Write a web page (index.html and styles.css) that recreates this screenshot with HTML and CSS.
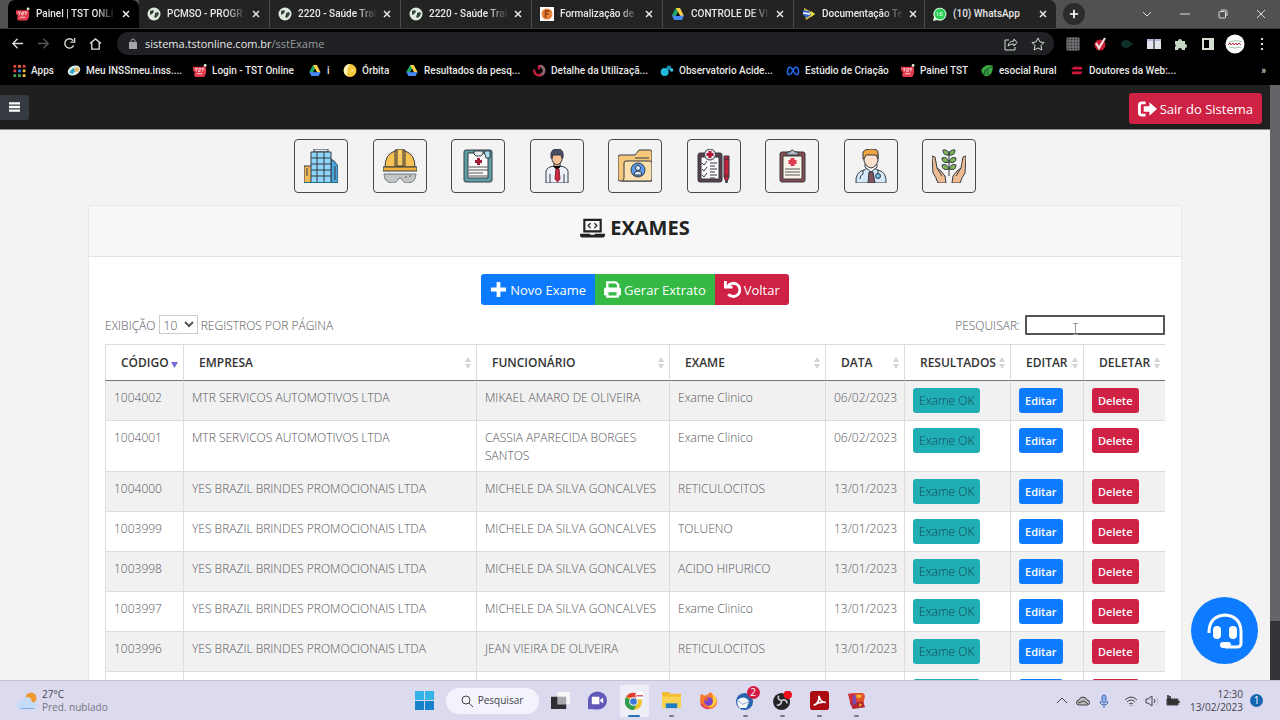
FILE: index.html
```html
<!DOCTYPE html>
<html lang="pt-BR">
<head>
    <meta charset="UTF-8">
    <meta name="viewport" content="width=device-width, initial-scale=1.0">
    <title>Painel | TST ONLINE</title>
    <link rel="stylesheet" href="styles.css">
</head>
<body>
    <!-- Shared icons -->
    <svg class="sprite" aria-hidden="true">
        <symbol id="tst" viewBox="0 0 15 14">
            <path d="M0 3h11l1-1 2 2v6l-1 2-1 2H2l-1-3 1-2-2-2z" fill="#e03a4c"/>
            <path d="M2 5h3M3.500 5v3M6 5h2v1.500h-2V8h2M9 5h3M10.500 5v3M4 10.500h6" stroke="#ffd9dc" fill="none"/>
            <circle cx="13" cy="1.500" r="1.500" fill="#dff3df"/>
        </symbol>
        <symbol id="globe" viewBox="0 0 14 14">
            <circle cx="7" cy="7" r="6.500" fill="#dfe8dc"/>
            <path d="M3 4l3-1 1 2-2 2-2 1zM8 6l3-1 1 2-2 3-2 1-1-2 1-1z" fill="#33443a"/>
        </symbol>
        <symbol id="drive" viewBox="0 0 14 14">
            <path d="M5 1h4l-5 12-3-5z" fill="#1fa463"/>
            <path d="M5 1h4l4 8H9z" fill="#ffcf48"/>
            <path d="M1 8.500h12L11 13H3z" fill="#4688f4"/>
            <path d="M7 5l2 4H5z" fill="#0b0b0b"/>
        </symbol>
        <symbol id="close" viewBox="0 0 8 8"><path d="M1 1l6 6M7 1L1 7" stroke="currentColor" stroke-width="1.500"/></symbol>
        <symbol id="sort" viewBox="0 0 6 12"><path d="M3 0l3 5H0zM3 12l3-5H0z" fill="#d3d3d8"/></symbol>
    </svg>

    <header class="browser">
        <div class="tab-strip">
            <div class="tab active"><svg><use href="#tst"/></svg><span>Painel | TST ONLI</span><button aria-label="Fechar"><svg><use href="#close"/></svg></button></div>
            <div class="tab"><svg><use href="#globe"/></svg><span>PCMSO - PROGR</span><button aria-label="Fechar"><svg><use href="#close"/></svg></button></div>
            <div class="tab"><svg><use href="#globe"/></svg><span>2220 - Saúde Tral</span><button aria-label="Fechar"><svg><use href="#close"/></svg></button></div>
            <div class="tab"><svg><use href="#globe"/></svg><span>2220 - Saúde Tral</span><button aria-label="Fechar"><svg><use href="#close"/></svg></button></div>
            <div class="tab"><svg viewBox="0 0 14 14"><path d="M0 0h14v14H0z" fill="#fff"/><circle cx="7" cy="7" r="5.500" fill="#e8833a"/><path d="M5.500 11V4h4M5.500 7h3" stroke="#8c3d12" stroke-width="1.500" fill="none"/></svg><span>Formalização de</span><button aria-label="Fechar"><svg><use href="#close"/></svg></button></div>
            <div class="tab"><svg><use href="#drive"/></svg><span>CONTROLE DE VI</span><button aria-label="Fechar"><svg><use href="#close"/></svg></button></div>
            <div class="tab"><svg viewBox="0 0 14 14"><path d="M2 1l11 6-9 6z" fill="#f5d13b"/><path d="M1 3l6 1 2 4-4 3-4-3z" fill="#3568c9"/><path d="M1 6l7 1" stroke="#fff" stroke-width="1.500"/><path d="M9 4l4 3-4 3z" fill="#e9e03a"/></svg><span>Documentação Te</span><button aria-label="Fechar"><svg><use href="#close"/></svg></button></div>
            <div class="tab last"><svg viewBox="0 0 14 14"><path d="M0 14l1-4a6.500 6.500 0 1 1 3 3z" fill="#e9fbe9"/><circle cx="7" cy="7" r="5.500" fill="#2bce55"/><path d="M4 5l1 4M7 5.500h2v3H7z" stroke="#b8f5c6" fill="none"/></svg><span>(10) WhatsApp</span><button aria-label="Fechar"><svg><use href="#close"/></svg></button></div>
            <button class="new-tab" aria-label="Nova guia"><svg viewBox="0 0 12 12"><path d="M6 1v10M1 6h10" stroke="#fff" stroke-width="2"/></svg></button>
            <div class="window-buttons">
                <button aria-label="Pesquisar guias"><svg viewBox="0 0 10 10"><path d="M1 3l4 4 4-4" /></svg></button>
                <button aria-label="Minimizar"><svg viewBox="0 0 10 10"><path d="M0 5h10"/></svg></button>
                <button aria-label="Restaurar"><svg viewBox="0 0 10 10"><rect x="1" y="2.500" width="6.500" height="6.500" rx="1"/><path d="M3 1h4.500q1.500 0 1.500 1.500V7"/></svg></button>
                <button aria-label="Fechar janela"><svg viewBox="0 0 10 10"><path d="M1 1l8 8M9 1L1 9"/></svg></button>
            </div>
        </div>

        <div class="toolbar">
            <div class="nav-buttons">
                <button aria-label="Voltar"><svg viewBox="0 0 14 14"><path d="M13 7H2M7 2L2 7l5 5"/></svg></button>
                <button aria-label="Avançar" disabled><svg viewBox="0 0 14 14"><path d="M1 7h11M7 2l5 5-5 5"/></svg></button>
                <button aria-label="Recarregar"><svg viewBox="0 0 14 14"><path d="M11.500 9A5 5 0 1 1 11 4M12.500 1v4.500H8"/></svg></button>
                <button aria-label="Início"><svg viewBox="0 0 14 14"><path d="M1 7l6-5 6 5M3 6v7h8V6"/></svg></button>
            </div>
            <div class="address">
                <svg class="lock" viewBox="0 0 8 11"><path d="M0 4h8v7H0z" fill="#a5a5a8"/><path d="M2 5V3a2 2 0 0 1 4 0v2" stroke="#a5a5a8" fill="none"/></svg>
                <a href="#">sistema.tstonline.com.br<span>/sstExame</span></a>
                <button aria-label="Compartilhar"><svg viewBox="0 0 14 14"><path d="M5 3H1v10h10v-3M4 9q1-5 6-5V2l3 3.500L10 9V7Q6 7 4 9z"/></svg></button>
                <button aria-label="Favoritar"><svg viewBox="0 0 14 14"><path d="M7 1l2 4 4 .5-3 3 .8 4.500L7 11l-3.800 2 .8-4.500-3-3L5 5z"/></svg></button>
            </div>
            <div class="extensions">
                <svg viewBox="0 0 14 14"><path d="M1 1h12v12H1zM1 4h12M1 7h12M1 10h12M4 1v12M7 1v12M10 1v12" stroke="#85858a" fill="#333"/></svg>
                <svg viewBox="0 0 14 14"><circle cx="7" cy="8" r="5.500" fill="#c71c2f"/><path d="M3 6l3 5 6-10" stroke="#f4dede" stroke-width="2.200" fill="none"/></svg>
                <svg viewBox="0 0 14 14"><ellipse cx="6" cy="7" rx="5" ry="4" fill="#0d3029"/><path d="M9 7h4" stroke="#0d3029" stroke-width="2"/></svg>
                <svg viewBox="0 0 14 14"><path d="M0 2h6.500v10H0zM7.500 2H14v10H7.500z" fill="#e3e3ec"/><path d="M0 3h6.500M7.500 3H14" stroke="#7f8fc0"/></svg>
                <svg viewBox="0 0 14 14"><path d="M1 4h3a2 2 0 1 1 4 0h3v3a2 2 0 1 1 0 4v2H8a2 2 0 0 0-4 0H1v-3a2 2 0 0 0 0-3z" fill="#c5d6c2"/></svg>
                <svg viewBox="0 0 14 14"><path d="M2 2h10v10H2z" fill="none" stroke="#d3ded0" stroke-width="2"/><path d="M8 2h4v10H8z" fill="#d3ded0"/></svg>
                <svg class="avatar" viewBox="0 0 20 20"><circle cx="10" cy="10" r="9.500" fill="#fff"/><path d="M3 9q7-4 14-1M4 13q6 2 12 0" stroke="#96c7a4" fill="none"/><path d="M3 11l2-2 1 2 2-2 1 2 2-2 1 2 2-2 2 2" stroke="#c72b41" fill="none"/></svg>
                <svg viewBox="0 0 14 14"><path d="M6 1h2v2H6zM6 6h2v2H6zM6 11h2v2H6z" fill="#ddd"/></svg>
            </div>
        </div>

        <nav class="bookmarks">
            <a href="#"><svg viewBox="0 0 14 14"><path d="M1 1h3v3H1zM1 6h3v3H1z" fill="#e5453c"/><path d="M6 1h3v3H6z" fill="#eb6b42"/><path d="M6 6h3v3H6z" fill="#3f83e8"/><path d="M11 1h3v3h-3z" fill="#e5453c"/><path d="M11 6h3v3h-3zM11 11h3v3h-3z" fill="#f0bf35"/><path d="M1 11h3v3H1zM6 11h3v3H6z" fill="#3faa59"/></svg>Apps</a>
            <a href="#"><svg viewBox="0 0 14 14"><ellipse cx="7" cy="7" rx="7" ry="5" fill="#dff0ea" transform="rotate(-25 7 7)"/><path d="M2 9l4-5 3 3-4 4z" fill="#34a7c7"/><circle cx="10" cy="6" r="2.500" fill="#e8b765"/></svg>Meu INSSmeu.inss....</a>
            <a href="#"><svg><use href="#tst"/></svg>Login - TST Online</a>
            <a href="#"><svg><use href="#drive"/></svg>i</a>
            <a href="#"><svg viewBox="0 0 14 14"><circle cx="7" cy="7" r="7" fill="#f5c93a"/><path d="M7 0A7 7 0 0 0 5 13.500Q2 8 7 0z" fill="#fff3c4"/><path d="M9 5l3 2-4 2z" fill="#fbe690"/></svg>Órbita</a>
            <a href="#"><svg><use href="#drive"/></svg>Resultados da pesq...</a>
            <a href="#"><svg viewBox="0 0 14 14"><path d="M8 2a5 5 0 0 1-1 10" stroke="#8b6e76" stroke-width="3" fill="none"/><path d="M2 6a5 5 0 0 0 8 5M7 1v5" stroke="#c51e3f" stroke-width="2.500" fill="none"/></svg>Detalhe da Utilizaçã...</a>
            <a href="#"><svg viewBox="0 0 14 14"><circle cx="4.500" cy="8.500" r="4.300" fill="#21b8dc"/><circle cx="9" cy="4" r="2.500" fill="#1d8fb6"/><circle cx="12" cy="6.500" r="1.800" fill="#37cfe8"/></svg>Observatorio Acide...</a>
            <a href="#"><svg viewBox="0 0 14 14"><path d="M1 9c0-7 4-7 6-2s6 6 6 2c0-7-4-7-6-2s-6 6-6 2z" stroke="#1e6df0" stroke-width="1.600" fill="none"/></svg>Estúdio de Criação</a>
            <a href="#"><svg><use href="#tst"/></svg>Painel TST</a>
            <a href="#"><svg viewBox="0 0 14 14"><path d="M1 6q5-7 12-4 1 8-5 11-7 1-7-7z" fill="#3fa646"/><path d="M3 12q1-6 9-9M5 6v6M8 5v7" stroke="#12501c" fill="none"/></svg>esocial Rural</a>
            <a href="#"><svg viewBox="0 0 14 14"><path d="M3 3h9l1 3H1zM1 8h12l-2 3H2z" fill="#d3163c"/></svg>Doutores da Web:...</a>
            <a href="#" class="more">»</a>
        </nav>
    </header>

    <div class="viewport">
        <main class="page">
            <div class="topbar">
                <button class="menu-toggle" aria-label="Menu"><svg viewBox="0 0 12 12"><path d="M0 2h12M0 6h12M0 10h12" stroke="#fff" stroke-width="2.500"/></svg></button>
                <button class="btn btn-danger logout"><svg viewBox="0 0 20 16"><path d="M8 1.500H4Q1.500 1.500 1.500 4v8q0 2.500 2.500 2.500h4" stroke="#fff" stroke-width="3" fill="none"/><path d="M6 5h6V1l8 7-8 7v-4H6z" fill="#fff"/></svg>Sair do Sistema</button>
            </div>

            <nav class="modules">
                <a href="#" aria-label="Empresas"><svg viewBox="0 0 34 34"><path d="M0 17h8v17H0z" fill="#f0b95b"/><path d="M3 19v8" /><path d="M27 10l3 2 4 5v17h-7z" fill="#4aa6dc"/><path d="M31 17v14"/><path d="M10 0h14v3H10z" fill="#e2e5ee"/><path d="M7 3h20v31H7z" fill="#8fd6fa"/><path d="M7 9h20M7 15h20M7 21h20M7 27h20M13 3v31M20 3v31"/><path d="M0 33.500h34" stroke="#1e6f87"/></svg></a>
                <a href="#" aria-label="EPI"><svg viewBox="0 0 34 34"><path d="M2 18Q2 5 12 2h10q10 3 10 16z" fill="#f4c351"/><path d="M12 17V1h3v16M19 17V1h3v16" fill="#e9a72f"/><path d="M14 0h6v17h-6z" fill="#f7cb61"/><path d="M0 18h34v4H0z" fill="#f1b13b"/><path d="M1 25h32q0 8-8 9-5 0-7-5h-2q-2 5-7 5-8-1-8-9z" fill="#c3c6c8" stroke="#777"/><path d="M22 28h2M26 27h2" stroke="#555"/></svg></a>
                <a href="#" aria-label="Documentos"><svg viewBox="0 0 34 34"><rect x="3" y="1" width="28" height="32" rx="2" fill="#5fa0a8"/><path d="M7 4h16l4 4v21H7z" fill="#fafafa"/><path d="M13 2h9v3l-2 2h-5l-2-2z" fill="#e8eef0"/><path d="M23 2h6v7h-4z" fill="#a8e0ee"/><path d="M17.500 9v7M14 12.500h7" stroke="#a11c38" stroke-width="3"/><path d="M8 18h19M8 21h19M8 24h14M8 27h19" stroke="#555"/></svg></a>
                <a href="#" aria-label="Funcionários"><svg viewBox="0 0 34 34"><path d="M6 34V22q1-4 8-5h6q7 1 8 5v12z" fill="#eef1fa"/><path d="M14 12h6v5l-3 3-3-3z" fill="#f3b184"/><path d="M12 5h10v6q-1 4-5 5-4-1-5-5z" fill="#fac096"/><path d="M11 9V4q1-4 6-4 6 0 6 5v4h-1l-1-3h-8l-1 3z" fill="#4b4f66"/><path d="M13 17l4 4 4-4"/><path d="M16 20h3l1 10-2.500 3-2.500-3z" fill="#c92d42" stroke="#8d1d30"/><path d="M10 25v9M24 25v9"/></svg></a>
                <a href="#" aria-label="Arquivos"><svg viewBox="0 0 34 34"><path d="M0 8q0-2 2-2h15l4-5h11q2 0 2 2v29H2q-2 0-2-2z" fill="#f4c77a"/><path d="M6 14q0-2 2-2h24q2 0 2 2v16q0 2-2 2H4q2-1 2-3z" fill="#fae0ac"/><path d="M17 9h14"/><circle cx="20" cy="21" r="7" fill="#5c9cf0"/><circle cx="20" cy="19" r="2.500" fill="#dbe9ff"/><path d="M16 26q0-4 4-4t4 4z" fill="#dbe9ff"/></svg></a>
                <a href="#" aria-label="Avaliações"><svg viewBox="0 0 34 34"><rect x="1" y="4" width="24" height="29" rx="2" fill="#5a3f4b"/><path d="M4 8h18v22H4z" fill="#f9f8fb"/><circle cx="13" cy="5.500" r="5.500" fill="#dfe2e9"/><path d="M13 2v7M9.500 5.500h7" stroke="#b41b3b" stroke-width="3"/><path d="M5 14l2 2 3-4M5 20l2 2 3-4M5 26l2 2 3-4M13 14h7M13 17h5M13 20h7M13 23h5M13 26h7M13 29h5" fill="none"/><path d="M27 7h5v21l-2.500 6-2.500-6z" fill="#c22036"/><path d="M27 10h5M27 27h5"/><path d="M29.500 32v2" stroke-width="2"/></svg></a>
                <a href="#" aria-label="Exames"><svg viewBox="0 0 34 34"><rect x="5" y="3" width="25" height="30" rx="2" fill="#8b4a4d"/><path d="M8 7h19v23H8z" fill="#fbf5e9"/><path d="M12 6V3h3q2-4 5 0h3v3z" fill="#b5bdc9"/><path d="M17.500 9v8M13.500 13h8" stroke="#dc3b50" stroke-width="4"/><path d="M10 20h15M10 23h15M10 26h15" stroke="#555"/></svg></a>
                <a href="#" aria-label="Médicos"><svg viewBox="0 0 34 34"><path d="M2 34q-1-11 8-13l4-2h6l4 2q9 2 8 13z" fill="#d5e9fa"/><path d="M11 18l6 5 6-5v-3H11z" fill="#fff"/><path d="M15 23h4l2 11h-7z" fill="#7d5360"/><path d="M10 5h14v7q-2 6-7 7-5-1-7-7z" fill="#fae0cd"/><path d="M9 10V3q2-3 7-3 8 0 8 3v7l-2-4H12l-2 4z" fill="#efa53e"/><path d="M9 21v4q-3 1-3 5M24 21v5" fill="none"/><circle cx="24" cy="27" r="2.500" fill="#6ec1e8"/></svg></a>
                <a href="#" aria-label="Meio ambiente"><svg viewBox="0 0 34 34"><path d="M0 7l3 1 2 11 4 3 4 5 1 7H6Q4 28 1 24z" fill="#eebc92"/><path d="M34 7l-3 1-2 11-4 3-4 5-1 7h8q2-6 5-10z" fill="#eebc92"/><path d="M5 19l5 8M29 19l-5 8M17 2v25"/><path d="M17 6q-6 1-6-5 5-1 6 5zM17 6q6 1 6-5-5-1-6 5zM17 13q-7 2-7-4 5-2 7 4zM17 13q7 2 7-4-5-2-7 4zM17 20q-7 2-7-4 5-2 7 4zM17 20q7 2 7-4-5-2-7 4z" fill="#7fb557"/></svg></a>
            </nav>

            <section class="card">
                <h1 class="card-header"><svg viewBox="0 0 26 20"><path d="M4.500 13.500v-12h17v12z" fill="none" stroke="#222" stroke-width="2.200"/><path d="M11 5L8.500 7.500 11 10M15 5l2.500 2.500L15 10" fill="none" stroke="#222" stroke-width="1.300"/><path d="M0 16h10l1 1h4l1-1h10v1q0 3-3 3H3q-3 0-3-3z" fill="#222"/></svg>EXAMES</h1>
                <div class="card-body">
                    <div class="btn-group">
                        <button class="btn btn-primary"><svg viewBox="0 0 18 18"><path d="M9 1v16M1 9h16" stroke="#fff" stroke-width="4"/></svg>Novo Exame</button>
                        <button class="btn btn-success"><svg viewBox="0 0 18 18"><path d="M3.500 8V1.500h9L15 4v4" fill="none" stroke="#fff" stroke-width="2.500"/><path d="M2 7h14q2 0 2 2v6h-3v-3H3v3H0V9q0-2 2-2z" fill="#fff"/><path d="M3.500 12v4.500h11V12" fill="none" stroke="#fff" stroke-width="2.500"/></svg>Gerar Extrato</button>
                        <button class="btn btn-danger"><svg viewBox="0 0 18 18"><path d="M4 5.500A7 7 0 1 1 4.500 14" fill="none" stroke="#fff" stroke-width="3"/><path d="M0 0h3v5h6v3H0z" fill="#fff"/></svg>Voltar</button>
                    </div>

                    <div class="table-tools">
                        <label>EXIBIÇÃO <select><option>10</option><option>25</option><option>50</option></select> REGISTROS POR PÁGINA</label>
                        <label class="table-search">PESQUISAR: <input type="search"><svg viewBox="0 0 5 12"><path d="M0 .5h5M0 11.500h5M2.500 1v10" stroke="#999"/></svg></label>
                    </div>

                    <table>
                        <colgroup>
                            <col class="w-code"><col><col class="w-name"><col class="w-exam"><col class="w-date"><col class="w-result"><col class="w-edit"><col class="w-delete">
                        </colgroup>
                        <thead>
                            <tr>
                                <th class="sorted">CÓDIGO<svg viewBox="0 0 7 6"><path d="M0 0h7L3.500 6z" fill="#7669d8"/></svg></th>
                                <th>EMPRESA<svg><use href="#sort"/></svg></th>
                                <th>FUNCIONÁRIO<svg><use href="#sort"/></svg></th>
                                <th>EXAME<svg><use href="#sort"/></svg></th>
                                <th>DATA<svg><use href="#sort"/></svg></th>
                                <th>RESULTADOS<svg><use href="#sort"/></svg></th>
                                <th>EDITAR<svg><use href="#sort"/></svg></th>
                                <th>DELETAR<svg><use href="#sort"/></svg></th>
                            </tr>
                        </thead>
                        <tbody id="exams"></tbody>
                    </table>
                </div>
            </section>

            <button class="support" aria-label="Suporte"><svg viewBox="0 0 36 36"><path d="M2 20v-2Q3 3 18 2q15 1 16 16v12q0 4-4 4H18" fill="none" stroke="#fff" stroke-width="3"/><rect x="6" y="13" width="8" height="13" rx="4" fill="#fff"/><rect x="22" y="13" width="8" height="13" rx="4" fill="#fff"/><rect x="13" y="29" width="11" height="6" rx="3" fill="#fff"/></svg></button>
        </main>
        <div class="scrollbar"><div class="thumb"></div></div>
    </div>

    <footer class="taskbar">
        <div class="weather">
            <svg viewBox="0 0 20 18"><circle cx="14" cy="6" r="5.500" fill="#ef9a31"/><path d="M4 17q-4-1-4-4t4-4q2-4 6-4t5 5q5 0 5 3.500T16 17z" fill="#c4dcf8"/><path d="M3 16.500h14" stroke="#7fabe8"/></svg>
            <div>27°C<br><span>Pred. nublado</span></div>
        </div>
        <div class="apps">
            <button aria-label="Iniciar"><svg viewBox="0 0 20 20"><path d="M0 0h9.500v9.500H0zM10.500 0H20v9.500h-9.500z" fill="#36b3e6"/><path d="M0 10.500h9.500V20H0zM10.500 10.500H20V20h-9.500z" fill="#1582cb"/></svg></button>
            <button class="search"><svg viewBox="0 0 12 12"><circle cx="5" cy="5" r="4"/><path d="M8 8l4 4"/></svg>Pesquisar</button>
            <button aria-label="Visão de tarefas"><svg viewBox="0 0 20 20"><path d="M7 1h13v13H7z" fill="#f6f6f8"/><path d="M0 6h7v8h9v5H0z" fill="#2d2f33"/><path d="M7 6h9v8H7z" fill="#a8a9ae"/></svg></button>
            <button aria-label="Chat"><svg viewBox="0 0 20 20"><path d="M0 19V10a10 9.500 0 1 1 10 9.500z" fill="#6059b8"/><path d="M4 6h8v8H4zM13 9l3-2v6l-3-2z" fill="#fff"/></svg></button>
            <button class="open current" aria-label="Chrome"><svg viewBox="0 0 20 20"><circle cx="9" cy="11" r="9" fill="#f2c230"/><path d="M1 6.500A9 9 0 0 1 17 7H9z" fill="#df4032"/><path d="M1 6.500A9 9 0 0 0 9 20l4-7-4-2z" fill="#2e9e52"/><circle cx="9" cy="11" r="4.500" fill="#fff"/><circle cx="9" cy="11" r="3.500" fill="#3777dc"/><circle cx="15.500" cy="4.500" r="4.500" fill="#fff"/><path d="M12 5h7" stroke="#cc5964" stroke-width="1.500"/></svg></button>
            <button class="open" aria-label="Explorador"><svg viewBox="0 0 20 20"><path d="M0 1h7l2 2h11v15H0z" fill="#f2bd35"/><path d="M0 6h20v12H0z" fill="#fbd353"/><path d="M4 13h12v5H4z" fill="#1c7dc0"/></svg></button>
            <button aria-label="Firefox"><svg viewBox="0 0 20 20"><path d="M1 10L2 3l4 2q4-1 6-4l3 3q4 3 4 8-1 7-9 7-8-1-9-9z" fill="#f97b2d"/><path d="M14 3q5 4 4 9-4 7-10 5 9 0 6-14z" fill="#ffd23e"/><path d="M2 13q3 6 9 5" stroke="#e83d63" stroke-width="2" fill="none"/><circle cx="10" cy="11" r="4.500" fill="#7846cf"/><path d="M5 7l5 1-2 3z" fill="#ed5c3d"/></svg></button>
            <button class="open" aria-label="Thunderbird"><svg viewBox="0 0 20 20"><circle cx="9" cy="11" r="9" fill="#2763ae"/><path d="M2 9q7-5 12 2l-3 7H4q-4-4-2-9z" fill="#f5f7fa"/><path d="M2 10l5 4 7-3" stroke="#8aa7c7" fill="none"/></svg><span class="count">2</span></button>
            <button class="open" aria-label="OBS"><svg viewBox="0 0 20 20"><circle cx="9" cy="11" r="9" fill="#242427"/><path d="M9 10q-5-1-3-5M9 10q5-2 6 3M9 10q0 5-5 5" stroke="#c9c9ce" stroke-width="1.800" fill="none"/><circle cx="15.500" cy="4" r="4.500" fill="#f20d1d"/></svg></button>
            <button class="open" aria-label="Acrobat"><svg viewBox="0 0 20 20"><rect x="0" y="0" width="20" height="20" rx="3" fill="#a90b10"/><path d="M4 15q6-2 5.500-10 1 7 7 7-7-1-12.500 3z" fill="none" stroke="#fff" stroke-width="1.800"/></svg></button>
            <button class="open" aria-label="Sistema"><svg viewBox="0 0 20 20"><path d="M1 3l7-1 1 11-5 2z" fill="#cf2f3a"/><path d="M7 2h10l2 3-2 9H8z" fill="#e2512d"/><path d="M3 12l14-1 2 6-13 2z" fill="#b3242f"/><path d="M6 5l3-1 1 9-4 2z" fill="#7b49b5"/><path d="M10 4h5v3h-5zM13 13l3 1-3 3z" fill="#f4b52f"/></svg></button>
        </div>
        <div class="tray">
            <svg viewBox="0 0 14 14"><path d="M2 9l5-5 5 5"/></svg>
            <svg viewBox="0 0 14 14"><path d="M3 11a2.500 2.500 0 0 1 0-5q1-3 4-3t4 3a2.500 2.500 0 0 1 0 5z" fill="#bbb"/><path d="M2 9l6-2 4 3"/></svg>
            <svg viewBox="0 0 14 14"><rect x="5" y="1" width="4" height="8" rx="2" fill="#8eb0e8" stroke="#3f68b5"/><path d="M3 7q0 4 4 4t4-4M7 11v3" stroke="#3f68b5"/></svg>
            <svg class="wifi" viewBox="0 0 14 14"><path d="M1 6q6-6 12 0M3 8q4-4 8 0M5 10q2-2 4 0M7 11v1"/></svg>
            <svg viewBox="0 0 14 14"><path d="M1 5h2l4-3v10L3 9H1zM9 5q2 2 0 4"/><path d="M11 3q4 4 0 8" stroke="#bbb"/></svg>
            <svg viewBox="0 0 14 14"><path d="M1 5h11v6H1z" fill="#333"/><path d="M13 7v2M2 1v5M4 2v4" stroke="#222" stroke-width="1.500"/></svg>
            <div class="clock">12:30<br>13/02/2023</div>
            <span class="notice">1</span>
        </div>
    </footer>

    <script>
        const exams = [
            ['1004002', 'MTR SERVICOS AUTOMOTIVOS LTDA', 'MIKAEL AMARO DE OLIVEIRA', 'Exame Clinico', '06/02/2023'],
            ['1004001', 'MTR SERVICOS AUTOMOTIVOS LTDA', 'CASSIA APARECIDA BORGES SANTOS', 'Exame Clinico', '06/02/2023'],
            ['1004000', 'YES BRAZIL BRINDES PROMOCIONAIS LTDA', 'MICHELE DA SILVA GONCALVES', 'RETICULOCITOS', '13/01/2023'],
            ['1003999', 'YES BRAZIL BRINDES PROMOCIONAIS LTDA', 'MICHELE DA SILVA GONCALVES', 'TOLUENO', '13/01/2023'],
            ['1003998', 'YES BRAZIL BRINDES PROMOCIONAIS LTDA', 'MICHELE DA SILVA GONCALVES', 'ACIDO HIPURICO', '13/01/2023'],
            ['1003997', 'YES BRAZIL BRINDES PROMOCIONAIS LTDA', 'MICHELE DA SILVA GONCALVES', 'Exame Clinico', '13/01/2023'],
            ['1003996', 'YES BRAZIL BRINDES PROMOCIONAIS LTDA', 'JEAN VIEIRA DE OLIVEIRA', 'RETICULOCITOS', '13/01/2023'],
            ['', '', '', '', '']
        ];

        const actions = `
            <td class="action"><button class="btn btn-sm btn-info">Exame OK</button></td>
            <td class="action"><button class="btn btn-sm btn-primary">Editar</button></td>
            <td class="action"><button class="btn btn-sm btn-danger">Delete</button></td>`;

        document.getElementById('exams').innerHTML = exams
            .map(exam => '<tr>' + exam.map(value => `<td>${value}</td>`).join('') + actions + '</tr>')
            .join('');
    </script>
</body>
</html>
```
FILE: styles.css
```css
* {
    box-sizing: border-box;
}

body {
    margin: 0;
    height: 100vh;
    display: flex;
    flex-direction: column;
    overflow: hidden;
    font-family: "Open Sans", "Noto Sans", sans-serif;
    font-size: 12px;
    line-height: 18px;
    color: #55555a;
    background: #f3f3f3;
}

button,
input,
select {
    font: inherit;
    color: inherit;
}

button {
    display: flex;
    align-items: center;
    justify-content: center;
    padding: 0;
    border: none;
    background: none;
    cursor: pointer;
}

a {
    color: inherit;
    text-decoration: none;
}

svg {
    display: block;
    flex: none;
}

.sprite {
    display: none;
}

/* Browser window */
.browser {
    background: #000;
    color: #e8e8e8;
    font-family: Roboto, "Open Sans", sans-serif;
    font-size: 10px;
    font-weight: 500;
}

.tab-strip {
    display: flex;
    align-items: center;
    height: 29px;
    padding-left: 8px;
    background: #515151;
    border-bottom: 1px solid #3c3c3c;
}

.tab {
    flex: 0 1 131px;
    min-width: 0;
    display: flex;
    align-items: center;
    gap: 6px;
    height: 28px;
    padding: 0 9px 0 8px;
    background: #232324;
    border-right: 1px solid #4a4a4a;
}

.tab.active {
    background: #000;
    border-radius: 7px 7px 0 0;
    border: none;
}

.tab.last {
    border: none;
    border-radius: 0 7px 0 0;
}

.tab > svg {
    width: 14px;
    height: 14px;
}

.tab span {
    flex: 1;
    white-space: nowrap;
    mask-image: linear-gradient(to right, #000 75%, transparent);
}

.tab.last span {
    mask-image: none;
}

.tab button svg {
    width: 8px;
    height: 8px;
}

.new-tab {
    width: 22px;
    height: 22px;
    margin-left: 7px;
    border-radius: 50%;
    background: #2b2b2c;
}

.new-tab svg {
    width: 10px;
    height: 10px;
}

.window-buttons {
    display: flex;
    gap: 28px;
    margin-left: auto;
    padding-right: 14px;
}

.window-buttons svg {
    width: 10px;
    height: 10px;
    fill: none;
    stroke: #ddd;
}

.toolbar {
    display: flex;
    align-items: center;
    gap: 12px;
    height: 29px;
    padding: 0 11px;
}

.toolbar svg {
    width: 14px;
    height: 14px;
}

.nav-buttons {
    display: flex;
    gap: 13px;
    width: 94px;
}

.nav-buttons svg,
.address button svg {
    fill: none;
    stroke: #d5ddd2;
    stroke-width: 1.5;
}

.nav-buttons svg {
    width: 13px;
    height: 13px;
}

.address button svg {
    stroke-width: 1;
}

.nav-buttons button:disabled {
    opacity: 0.4;
}

.address {
    flex: 1;
    display: flex;
    align-items: center;
    gap: 13px;
    height: 23px;
    padding: 0 9px;
    border-radius: 12px;
    background: #202124;
    font-family: "Open Sans", sans-serif;
    font-size: 11px;
}

.address a {
    flex: 1;
    margin-left: -8px;
}

.address span {
    color: #9a9a9d;
    font-weight: 400;
}

.address .lock {
    width: 14px;
    height: 11px;
}

.extensions {
    display: flex;
    align-items: center;
    gap: 13px;
}

.extensions .avatar {
    width: 20px;
    height: 20px;
    margin: 0 -3px;
}

.bookmarks {
    display: grid;
    grid-template-columns: 55px 126px 115px 35px 62px 127px 128px 126px 115px 79px 90px 1fr auto;
    align-items: center;
    height: 27px;
    padding: 0 14px 2px 12px;
}

.bookmarks a {
    display: flex;
    align-items: center;
    gap: 5px;
    white-space: nowrap;
}

.bookmarks svg {
    width: 14px;
    height: 13px;
}

/* Page */
.viewport {
    flex: 1;
    min-height: 0;
    display: flex;
}

.page {
    position: relative;
    flex: 1;
    display: flex;
    flex-direction: column;
    align-items: center;
    overflow: hidden;
}

.scrollbar {
    width: 10px;
    background: #333338;
}

.thumb {
    height: 90%;
    background: #646469;
}

.topbar {
    align-self: stretch;
    display: flex;
    align-items: center;
    justify-content: space-between;
    flex: none;
    height: 45px;
    padding-right: 8px;
    background: #1f1f1f;
    border-bottom: 1px solid #8a8a8a;
}

.menu-toggle {
    width: 29px;
    height: 25px;
    border-radius: 0 3px 3px 0;
    background: #343a40;
}

.menu-toggle svg {
    width: 11px;
    height: 12px;
}

.btn {
    gap: 3px;
    height: 31px;
    padding: 0 9px;
    border-radius: 3px;
    color: #fff;
    font-size: 13px;
    font-weight: 500;
    white-space: nowrap;
}

.btn svg {
    width: 17px;
    height: 17px;
}

.btn-primary {
    background: #0d7bff;
}

.btn-success {
    background: #33b944;
}

.btn-danger {
    background: #ce2144;
}

.btn-info {
    background: #20adb4;
    color: #164a54;
}

.logout {
    margin-top: 3px;
}

.logout svg {
    width: 19px;
    height: 16px;
}

.modules {
    display: flex;
    justify-content: space-between;
    flex: none;
    width: 100%;
    max-width: 682px;
    padding: 9px 0 12px;
}

.modules a {
    padding: 9px;
    border: 1px solid #4a4a4a;
    border-radius: 4px;
}

.modules svg {
    width: 34px;
    height: 34px;
    stroke: #333a44;
    stroke-width: 1;
}

.card {
    flex: none;
    width: calc(100% - 176px);
    border: 1px solid #e8e8e8;
    background: #fff;
}

.card-header {
    display: flex;
    align-items: center;
    justify-content: center;
    gap: 5px;
    height: 51px;
    margin: 0;
    padding-bottom: 7px;
    background: #f7f7f7;
    border-bottom: 1px solid #e2e2e2;
    color: #222;
    font-size: 20px;
    font-weight: 700;
}

.card-header svg {
    width: 25px;
    height: 20px;
}

.card-body {
    padding: 17px 16px;
}

.btn-group {
    display: flex;
    justify-content: center;
}

.btn-group .btn {
    border-radius: 0;
}

.btn-group .btn:first-child {
    border-radius: 3px 0 0 3px;
}

.btn-group .btn:last-child {
    border-radius: 0 3px 3px 0;
}

.table-tools {
    display: flex;
    align-items: center;
    justify-content: space-between;
    height: 39px;
    font-weight: 300;
}

.table-tools select {
    width: 39px;
    height: 19px;
    padding: 0;
    border: 1px solid #ccc;
    background: #fff;
}

.table-search {
    position: relative;
}

.table-search input {
    width: 140px;
    height: 20px;
    margin-left: 2px;
    padding: 0 4px;
    border: 2px solid #555;
    border-radius: 1px;
    background: #fff;
}

.table-search svg {
    position: absolute;
    right: 87px;
    bottom: 0;
    width: 5px;
    height: 12px;
}

table {
    width: 100%;
    table-layout: fixed;
    border-spacing: 0;
    border-top: 1px solid #dcdce0;
}

.w-code {
    width: 78px;
}

.w-name {
    width: 193px;
}

.w-exam {
    width: 156px;
}

.w-date {
    width: 79px;
}

.w-result {
    width: 106px;
}

.w-edit {
    width: 73px;
}

.w-delete {
    width: 82px;
}

th {
    position: relative;
    height: 36px;
    padding: 0 0 0 15px;
    border-left: 1px solid #dcdce0;
    border-bottom: 1px solid #77777b;
    color: #333;
    font-weight: 600;
    text-align: left;
    white-space: nowrap;
}

th svg {
    position: absolute;
    top: 12px;
    right: 5px;
    width: 6px;
    height: 12px;
}

th.sorted svg {
    top: 17px;
    width: 7px;
    height: 6px;
}

td {
    padding: 8px 8px 6px;
    border-left: 1px solid #dcdce0;
    border-bottom: 1px solid #dcdce0;
    font-weight: 300;
    vertical-align: top;
}

td.action {
    padding: 7px 8px;
}

tbody tr:nth-child(odd) {
    background: #f1f1f1;
}

.btn-sm {
    height: 25px;
    padding: 0 6px;
    font-size: 11px;
    font-weight: 600;
}

.btn-sm.btn-info {
    font-size: 12px;
    font-weight: 300;
}

.support {
    position: absolute;
    right: 12px;
    bottom: 16px;
    width: 67px;
    height: 67px;
    border-radius: 50%;
    background: #0d7bff;
}

.support svg {
    width: 36px;
    height: 36px;
}

/* Taskbar */
.taskbar {
    display: grid;
    grid-template-columns: 1fr auto 1fr;
    align-items: center;
    height: 40px;
    padding: 0 17px;
    border-top: 1px solid #c4c4d0;
    background: #dcdaee;
    color: #45454d;
    font-size: 10px;
    line-height: 13px;
}

.weather {
    display: flex;
    align-items: center;
    gap: 5px;
}

.weather svg {
    width: 20px;
    height: 18px;
}

.weather span {
    color: #77777f;
}

.apps {
    display: flex;
    align-items: center;
}

.apps button {
    position: relative;
    width: 37px;
    height: 39px;
}

.apps svg {
    width: 19px;
    height: 19px;
}

.apps .search {
    gap: 5px;
    width: 93px;
    height: 26px;
    margin: 0 3px;
    border-radius: 13px;
    background: #f3f3fb;
}

.apps .search svg {
    width: 12px;
    height: 12px;
    fill: none;
    stroke: #444;
}

.apps .open::after {
    content: "";
    position: absolute;
    bottom: 3px;
    width: 5px;
    height: 2px;
    border-radius: 1px;
    background: #77777f;
}

.apps .current {
    background: linear-gradient(#eeeef8, #eeeef8) center / 29px 32px no-repeat;
}

.apps .current::after {
    width: 12px;
    background: #2d74b5;
}

.count {
    position: absolute;
    top: 5px;
    right: 4px;
    width: 13px;
    height: 13px;
    border-radius: 50%;
    background: #d41c43;
    color: #fff;
}

.tray {
    display: flex;
    align-items: center;
    justify-content: flex-end;
    gap: 7px;
}

.tray svg {
    width: 14px;
    height: 14px;
    fill: none;
    stroke: #44444a;
}

.tray .wifi {
    margin-left: 6px;
}

.clock {
    margin-left: 3px;
    text-align: right;
}

.notice {
    width: 13px;
    height: 13px;
    border-radius: 50%;
    background: #1466b0;
    color: #fff;
    text-align: center;
}
```
